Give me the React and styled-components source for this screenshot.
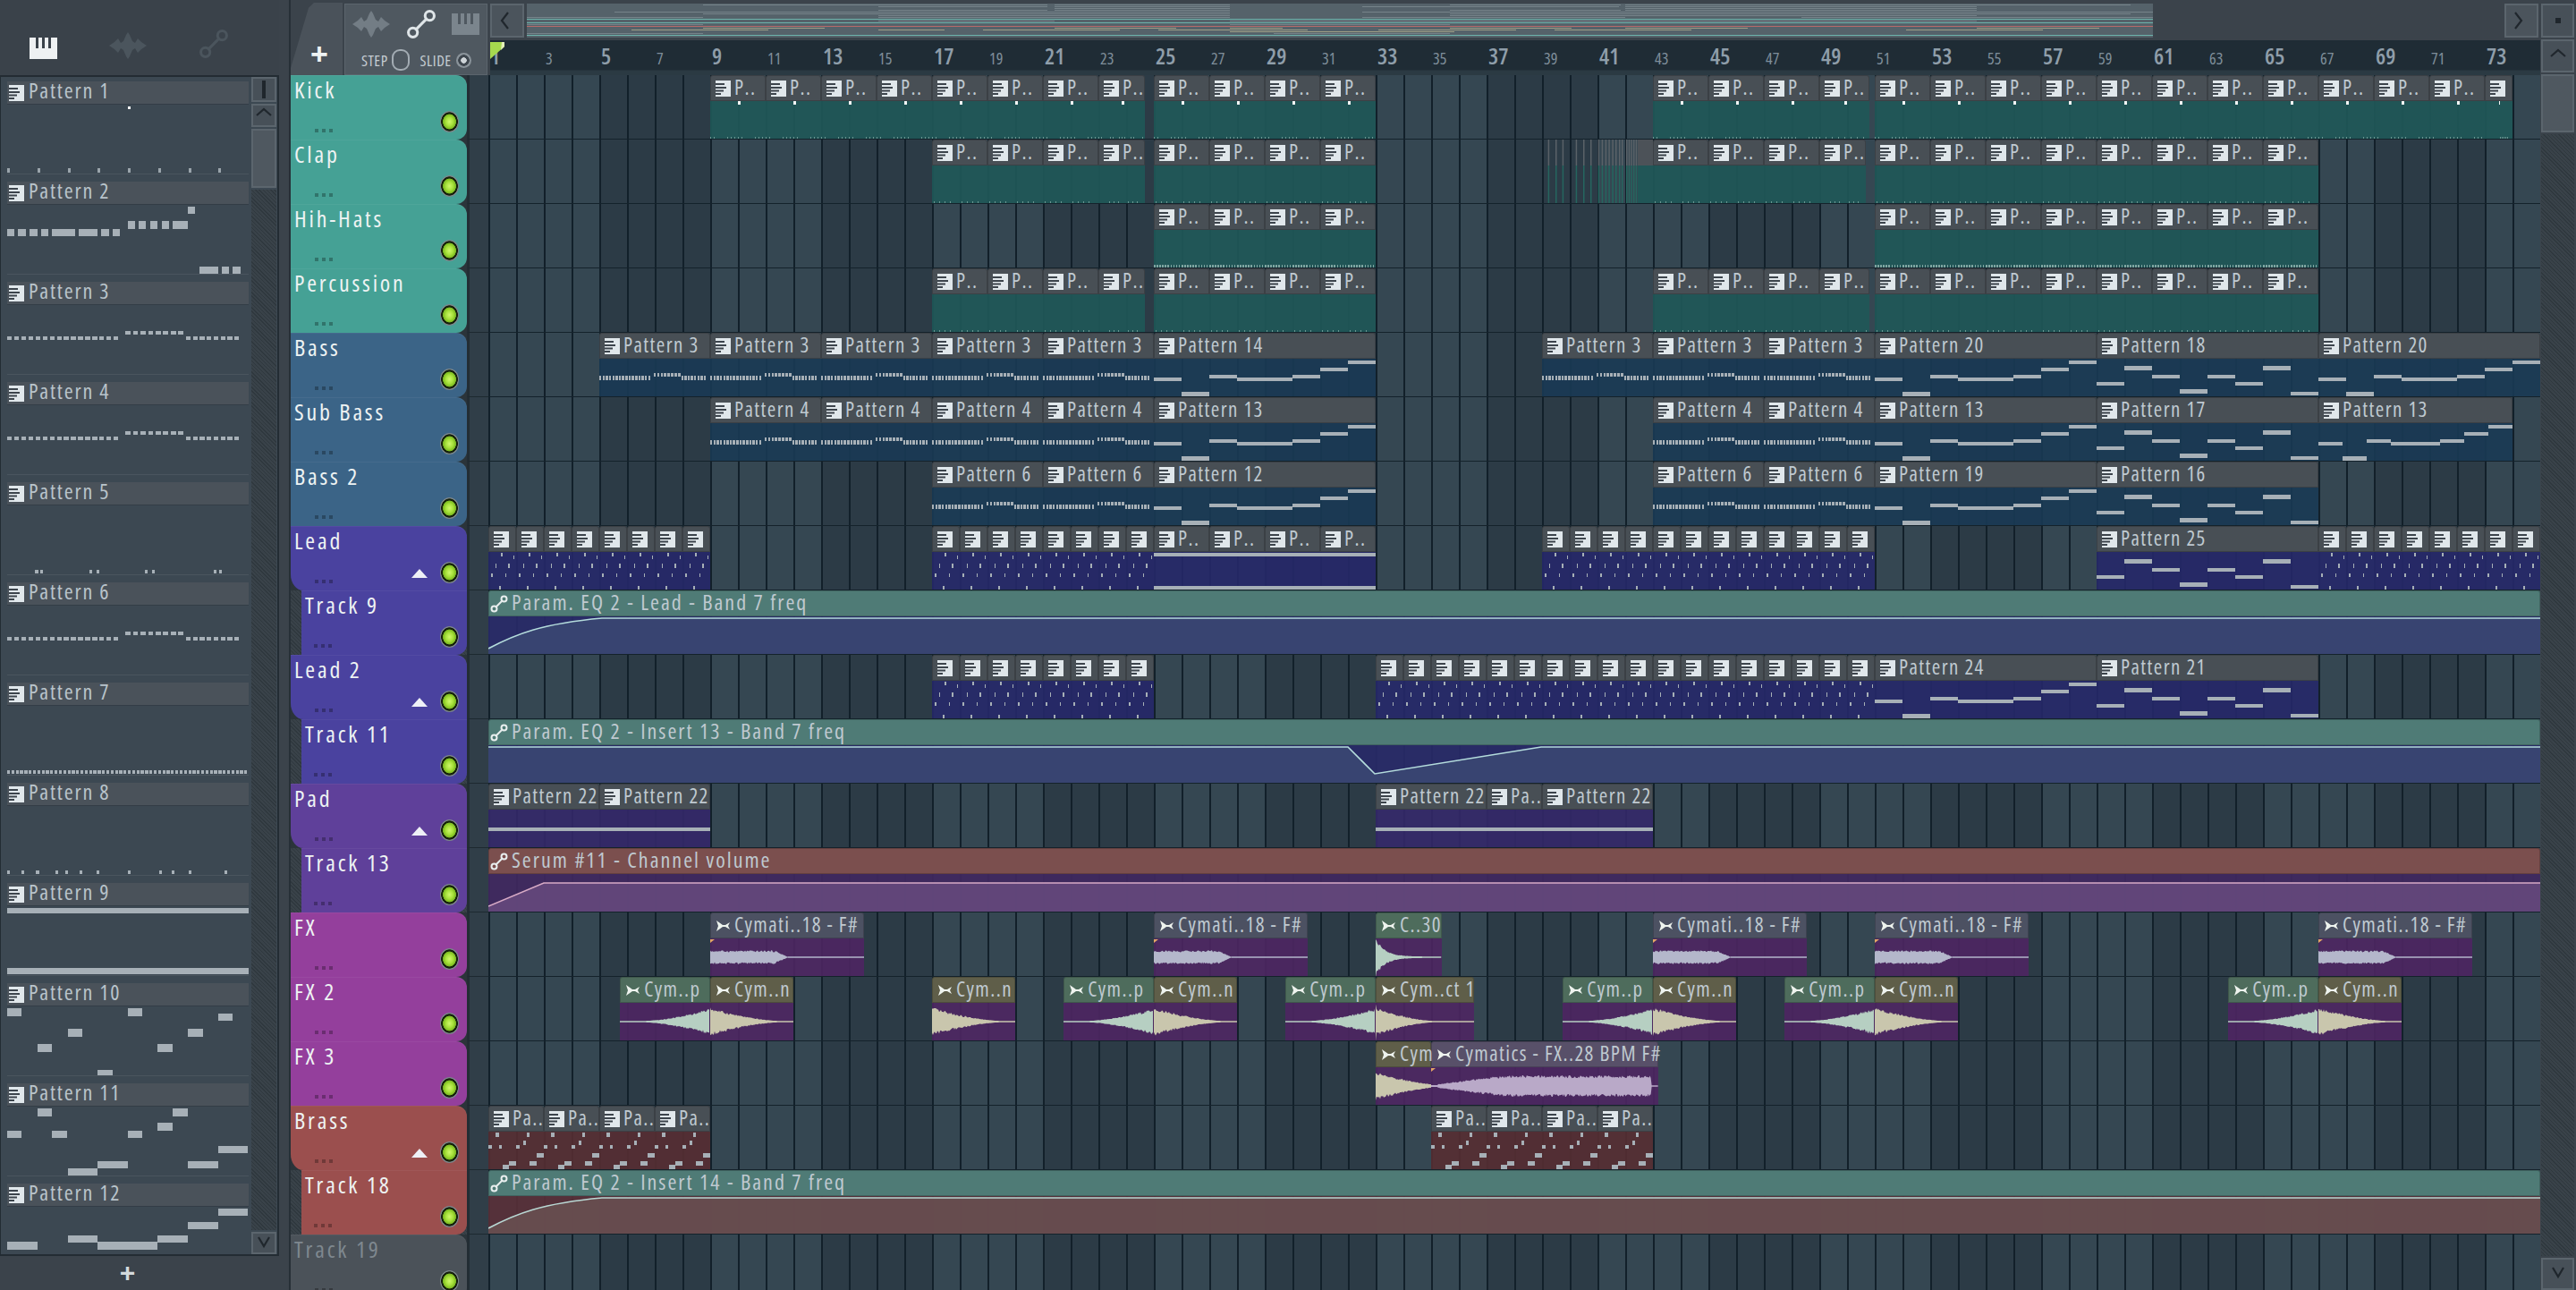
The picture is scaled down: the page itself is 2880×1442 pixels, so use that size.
import React from 'react';
import styled, { createGlobalStyle } from 'styled-components';

const BAR = 31;
const ROW = 72;

const GlobalStyle = createGlobalStyle`
    html, body { margin: 0; padding: 0; background: #3b434b; overflow: hidden; }
    * { box-sizing: border-box; }
    body { font-family: "Open Sans", "Liberation Sans", sans-serif; font-stretch: 75%; }
`;

// note helpers, x is measured off the picker (20..680 across a preview)
const px = (y, xs, h = 0.11) => {
    const out = [];
    for (let i = 0; i < xs.length; i += 2) {
        out.push([(xs[i] - 20) / 660, y, (xs[i + 1] - xs[i]) / 660, h]);
    }
    return out;
};
const dots = (from, to, y, n, h = 0.1) =>
    Array.from({ length: n }, (_, i) => [from + (i * (to - from)) / n, y, ((to - from) / n) * 0.68, h]);

const makeRiff = (h) => [...dots(0, 0.47, 0.46, 16, h), ...dots(0.49, 0.74, 0.38, 8, h), ...dots(0.74, 0.97, 0.46, 8, h)];
const riff = makeRiff(0.1);
const riffThin = makeRiff(0.05);
const marker = [0.5, 0, 0.05, 0.09, '#f2f5f5'];
const kickTicks = [marker, ...Array.from({ length: 16 }, (_, i) => [i / 16, 0.95, 0.012, 0.05, '#6a9792'])];
const clapTicks = Array.from({ length: 10 }, (_, i) => [i / 10 + 0.03, 0.95, 0.012, 0.05, '#6a9792']);
const hatTicks = Array.from({ length: 42 }, (_, i) => [i / 42, 0.94, 0.012, 0.06, '#7fa5a1']);
const leadDots = [[0.45, 0.02, 0.05, 0.1], [0.9, 0.1, 0.05, 0.1], [0.25, 0.32, 0.05, 0.1], [0.72, 0.32, 0.05, 0.1], [0.1, 0.56, 0.05, 0.1], [0.6, 0.56, 0.05, 0.1], [0.4, 0.9, 0.05, 0.1]];

const line14 = [[0, 0.5, 0.125, 0.1], [0.125, 0.89, 0.125, 0.1], [0.25, 0.42, 0.125, 0.1], [0.375, 0.5, 0.25, 0.1], [0.625, 0.42, 0.125, 0.1], [0.75, 0.23, 0.125, 0.1], [0.875, 0.04, 0.125, 0.1]];
const line18 = [[0, 0.62, 0.125, 0.1], [0.125, 0.2, 0.125, 0.1], [0.25, 0.42, 0.125, 0.1], [0.375, 0.82, 0.125, 0.1], [0.5, 0.42, 0.125, 0.1], [0.625, 0.62, 0.125, 0.1], [0.75, 0.2, 0.125, 0.1], [0.875, 0.88, 0.125, 0.1]];
const padLine = [[0, 0.48, 1, 0.1]];
const topBottom = [[0, 0.02, 1, 0.09], [0, 0.9, 1, 0.09]];

const PATTERNS = [
    { name: 'Pattern 1', notes: [[0.5, 0.02, 0.012, 0.05, '#fff'], ...Array.from({ length: 8 }, (_, i) => [i / 8, 0.92, 0.012, 0.07, '#9aa4ab'])] },
    { name: 'Pattern 2', notes: [
        ...px(0.35, [20, 40, 50, 72, 82, 102, 113, 133, 143, 205, 215, 267, 277, 298, 308, 328]),
        ...px(0.24, [349, 370, 380, 400, 411, 431, 442, 462, 473, 514]),
        ...px(0.02, [514, 534]),
        ...px(0.89, [545, 596, 606, 627, 637, 658]),
    ] },
    { name: 'Pattern 3', notes: riffThin },
    { name: 'Pattern 4', notes: riffThin },
    { name: 'Pattern 5', notes: [0.116, 0.137, 0.34, 0.37, 0.57, 0.6, 0.856, 0.877].map((x) => [x, 0.93, 0.012, 0.06]) },
    { name: 'Pattern 6', notes: riffThin },
    { name: 'Pattern 7', notes: dots(0, 1, 0.93, 56, 0.06) },
    { name: 'Pattern 8', notes: [0, 0.06, 0.12, 0.2, 0.24, 0.3, 0.37, 0.5, 0.63, 0.68, 0.75, 0.9].map((x) => [x, 0.93, 0.012, 0.06]) },
    { name: 'Pattern 9', notes: topBottom },
    { name: 'Pattern 10', notes: [
        ...px(0.03, [20, 60, 349, 390]),
        ...px(0.1, [596, 637]),
        ...px(0.33, [185, 225, 514, 555]),
        ...px(0.55, [102, 143, 431, 472]),
        ...px(0.92, [267, 308]),
    ] },
    { name: 'Pattern 11', notes: [
        ...px(0.03, [102, 143, 473, 514]),
        ...px(0.24, [431, 472]),
        ...px(0.35, [20, 60, 143, 184, 349, 390]),
        ...px(0.57, [596, 678]),
        ...px(0.79, [267, 349, 514, 596]),
        ...px(0.89, [185, 267]),
    ] },
    { name: 'Pattern 12', notes: [
        ...px(0.02, [596, 678]),
        ...px(0.22, [514, 596]),
        ...px(0.41, [185, 267, 431, 514]),
        ...px(0.51, [20, 102, 267, 349, 349, 431]),
    ] },
];
const brassNotes = PATTERNS[10].notes;

const seq = (start, count, len, label, notes, lastLen) =>
    Array.from({ length: count }, (_, i) => ({
        type: 'pattern',
        start: start + i * len,
        len: i === count - 1 && lastLen ? lastLen : len,
        label,
        notes,
    }));
const wave = (start, len, label, head, fill, env, mark) => ({ type: 'audio', start, len, label, head, fill, env, mark });
const auto = (label, path, theme) => ({ type: 'auto', start: 1, len: 74, label, path, ...theme });

// waveform envelopes, t = 0..1 across the clip
const envFx = (t) => (t < 0.42 ? 7 : t < 0.5 ? 7 - (t - 0.42) * 80 : 0.7);
const envHit = (t) => 20 * Math.exp(-t * 7) + 0.7;
const envRise = (t) => 13 * Math.pow(Math.max(0, (t - 0.25) / 0.75), 1.6) + 0.7;
const envFall = (t) => 14 * Math.pow(Math.max(0, 1 - t / 0.85), 1.6) + 0.7;
const envFallLong = (t) => (t < 0.004 ? 20 : 14 * Math.pow(Math.max(0, 1 - t / 0.6), 1.6) + 0.7);
const envSwell = (t) => (t > 0.97 ? 0.7 : t < 0.03 ? 1 : Math.min(11, 1 + t * 32));

const GREEN = '#4e6c5c';
const OLIVE = '#5f5e49';
const SLATE = '#4c5162';
const WAVE_G = '#b6cfc2';
const WAVE_O = '#c9c6ad';
const WAVE_S = '#b4b7cb';

const cymFx = (start) => wave(start, 5.55, 'Cymati..18 - F#', SLATE, WAVE_S, envFx, true);
const cymP = (start) => wave(start, 3.25, 'Cym..p', GREEN, WAVE_G, envRise);
const cymN = (start) => wave(start, 3, 'Cym..n', OLIVE, WAVE_O, envFall);

const TEAL_BODY = 'rgba(32,88,88,.92)';
const tealAuto = { head: '#4f7b76', above: 'rgba(40,42,104,.92)', below: 'rgba(58,70,114,.92)', stroke: '#b4dcdc' };

const TRACKS = [
    { name: 'Kick', color: '#45a195', body: TEAL_BODY, clips: [
        ...seq(9, 8, 2, 'P..', kickTicks, 1.7), ...seq(25, 4, 2, 'P..', kickTicks), ...seq(43, 4, 2, 'P..', kickTicks, 1.8),
        ...seq(51, 11, 2, 'P..', kickTicks), ...seq(73, 1, 1, '', kickTicks),
    ] },
    { name: 'Clap', color: '#45a195', body: TEAL_BODY, clips: [
        ...seq(17, 4, 2, 'P..', clapTicks, 1.7), ...seq(25, 4, 2, 'P..', clapTicks), { type: 'glitch', start: 39, len: 4 },
        ...seq(43, 4, 2, 'P..', clapTicks, 1.7), ...seq(51, 8, 2, 'P..', clapTicks),
    ] },
    { name: 'Hih-Hats', color: '#45a195', body: TEAL_BODY, clips: [
        ...seq(25, 4, 2, 'P..', hatTicks), ...seq(51, 8, 2, 'P..', hatTicks),
    ] },
    { name: 'Percussion', color: '#45a195', body: TEAL_BODY, clips: [
        ...seq(17, 4, 2, 'P..', clapTicks, 1.7), ...seq(25, 4, 2, 'P..', clapTicks), ...seq(43, 4, 2, 'P..', clapTicks, 1.8), ...seq(51, 8, 2, 'P..', clapTicks),
    ] },
    { name: 'Bass', color: '#3b6487', body: 'rgba(26,58,84,.9)', clips: [
        ...seq(5, 5, 4, 'Pattern 3', riff), ...seq(25, 1, 8, 'Pattern 14', line14), ...seq(39, 3, 4, 'Pattern 3', riff),
        ...seq(51, 1, 8, 'Pattern 20', line14), ...seq(59, 1, 8, 'Pattern 18', line18), ...seq(67, 1, 8, 'Pattern 20', line14),
    ] },
    { name: 'Sub Bass', color: '#3b6487', body: 'rgba(26,58,84,.9)', clips: [
        ...seq(9, 4, 4, 'Pattern 4', riff), ...seq(25, 1, 8, 'Pattern 13', line14), ...seq(43, 2, 4, 'Pattern 4', riff),
        ...seq(51, 1, 8, 'Pattern 13', line14), ...seq(59, 1, 8, 'Pattern 17', line18), ...seq(67, 1, 7, 'Pattern 13', line14),
    ] },
    { name: 'Bass 2', color: '#3b6487', body: 'rgba(26,58,84,.9)', clips: [
        ...seq(17, 2, 4, 'Pattern 6', riff), ...seq(25, 1, 8, 'Pattern 12', line14), ...seq(43, 2, 4, 'Pattern 6', riff),
        ...seq(51, 1, 8, 'Pattern 19', line14), ...seq(59, 1, 8, 'Pattern 16', line18),
    ] },
    { name: 'Lead', color: '#4a429f', parent: true, body: 'rgba(38,40,105,.9)', clips: [
        ...seq(1, 8, 1, '', leadDots), ...seq(17, 8, 1, '', leadDots), ...seq(25, 4, 2, 'P..', topBottom), ...seq(39, 12, 1, '', leadDots),
        ...seq(59, 1, 8, 'Pattern 25', line18), ...seq(67, 8, 1, '', leadDots),
    ] },
    { name: 'Track 9', color: '#4a429f', child: true, clips: [
        auto('Param. EQ 2 - Lead - Band 7 freq', 'M0 36 C30 20 60 8 127 2 L2294 2', tealAuto),
    ] },
    { name: 'Lead 2', color: '#4a429f', parent: true, body: 'rgba(38,40,105,.9)', clips: [
        ...seq(17, 8, 1, '', leadDots), ...seq(33, 18, 1, '', leadDots), ...seq(51, 1, 8, 'Pattern 24', line14), ...seq(59, 1, 8, 'Pattern 21', line18),
    ] },
    { name: 'Track 11', color: '#4a429f', child: true, clips: [
        auto('Param. EQ 2 - Insert 13 - Band 7 freq', 'M0 2 L961 2 L991 32 L1177 2 L2294 2', tealAuto),
    ] },
    { name: 'Pad', color: '#5f409a', parent: true, body: 'rgba(52,40,105,.9)', clips: [
        ...seq(1, 2, 4, 'Pattern 22', padLine), ...seq(33, 1, 4, 'Pattern 22', padLine), ...seq(37, 1, 2, 'Pa..', padLine), ...seq(39, 1, 4, 'Pattern 22', padLine),
    ] },
    { name: 'Track 13', color: '#5f409a', child: true, clips: [
        auto('Serum #11 - Channel volume', 'M0 36 L62 10 L2294 10', { head: '#7b4f4e', above: 'rgba(64,40,95,.92)', below: 'rgba(100,72,124,.92)', stroke: '#d8abc6' }),
    ] },
    { name: 'FX', color: '#943f9c', body: 'rgba(78,38,98,.9)', clips: [
        cymFx(9), cymFx(25), wave(33, 2.4, 'C..30', GREEN, WAVE_G, envHit), cymFx(43), cymFx(51), cymFx(67),
    ] },
    { name: 'FX 2', color: '#943f9c', body: 'rgba(78,38,98,.9)', clips: [
        cymP(5.75), cymN(9), cymN(17), cymP(21.75), cymN(25), cymP(29.75), wave(33, 3.55, 'Cym..ct 1', OLIVE, WAVE_O, envFallLong),
        cymP(39.75), cymN(43), cymP(47.75), cymN(51), cymP(63.75), cymN(67),
    ] },
    { name: 'FX 3', color: '#943f9c', body: 'rgba(78,38,98,.9)', clips: [
        wave(33, 2, 'Cym', OLIVE, WAVE_O, (t) => envFall(t * 0.66)),
        wave(35, 8.2, 'Cymatics - FX..28 BPM F#', '#585069', '#b9a9c8', envSwell, true),
    ] },
    { name: 'Brass', color: '#9b4f4e', parent: true, body: 'rgba(86,46,50,.9)', clips: [
        ...seq(1, 4, 2, 'Pa..', brassNotes), ...seq(35, 4, 2, 'Pa..', brassNotes),
    ] },
    { name: 'Track 18', color: '#9b4f4e', child: true, clips: [
        auto('Param. EQ 2 - Insert 14 - Band 7 freq', 'M0 36 C30 20 60 8 127 2 L2294 2', { head: '#4f7b76', above: 'rgba(88,48,56,.92)', below: 'rgba(104,78,80,.92)', stroke: '#b9d8d4' }),
    ] },
    { name: 'Track 19', color: '#4b5259', dim: true, clips: [] },
];

const Shell = styled.div`
    display: flex;
    width: 2880px;
    height: 1442px;
    overflow: hidden;
    background: #3b434b;
    color: #b9c4cb;
`;

/* ---- pattern picker ---- */
const LeftCol = styled.div`
    width: 312px;
    flex: none;
    display: flex;
    flex-direction: column;
`;
const PickerTop = styled.div`
    height: 84px;
    flex: none;
    display: flex;
    align-items: flex-end;
    padding: 0 0 18px 33px;
    gap: 58px;
    background: #3a424a;
`;
const PickerBox = styled.div`
    flex: 1;
    min-height: 0;
    display: flex;
    background: #3c4852;
    border: 2px solid #232c33;
    border-left-width: 1px;
`;
const PickerList = styled.div`
    flex: 1;
    min-width: 0;
    padding: 5px 3px 0 7px;
    display: flex;
    flex-direction: column;
`;
const PickerItem = styled.div`
    height: 112px;
    flex: none;
`;
const ItemHead = styled.div`
    height: 26px;
    display: flex;
    align-items: center;
    gap: 5px;
    padding: 0 0 0 2px;
    background: #4a525a;
    border-bottom: 1px solid #333d46;
    font-size: 24px;
    line-height: 24px;
    letter-spacing: 1.8px;
    color: #b9c4cb;
`;
const ItemLabel = styled.span`
    position: relative;
    top: -3px;
`;
const ItemNotes = styled.div`
    height: 78px;
    border-bottom: 1px solid #4a555e;
`;
const PickerBar = styled.div`
    width: 29px;
    flex: none;
    padding: 0 1px 0 0;
    display: flex;
    flex-direction: column;
    gap: 2px;
`;
const SquareBtn = styled.div`
    flex: none;
    height: ${(p) => p.$h}px;
    display: flex;
    align-items: center;
    justify-content: center;
    background: ${(p) => (p.$thumb ? '#4f5860' : '#475058')};
    border: 2px solid #5b656d;
`;
const Hatch = styled.div`
    flex: 1;
    min-height: 0;
    background: repeating-linear-gradient(45deg, #2f383e 0 1px, #394249 1px 3px);
`;
const PickerFoot = styled.div`
    position: relative;
    z-index: 1;
    height: 38px;
    flex: none;
    display: flex;
    align-items: center;
    justify-content: center;
    padding-right: 27px;
    background: #3b434b;
    font: bold 30px "Liberation Sans", sans-serif;
    color: #d4dadd;
`;
const Seam = styled.div`
    width: 13px;
    flex: none;
    border-right: 2px solid #273037;
`;

/* ---- main column ---- */
const MainCol = styled.div`
    flex: 1;
    min-width: 0;
    display: flex;
    flex-direction: column;
`;
const TopArea = styled.div`
    height: 84px;
    flex: none;
    display: flex;
`;
const PlusTab = styled.div`
    width: 58px;
    flex: none;
    margin-top: 3px;
    display: flex;
    align-items: flex-end;
    justify-content: center;
    padding: 0 0 4px 6px;
    background: #4a525a;
    clip-path: polygon(0 100%, 0 90%, 20px 7%, 26px 0, 100% 0, 100% 100%);
    font: bold 34px "Liberation Sans", sans-serif;
    color: #eef2f3;
`;
const ToolPanel = styled.div`
    width: 160px;
    flex: none;
    margin: 4px 3px 0 2px;
    padding: 4px 8px 0;
    display: flex;
    flex-direction: column;
    background: #4f5860;
    border: 1px solid #5b656d;
`;
const ToolIcons = styled.div`
    height: 36px;
    display: flex;
    align-items: center;
    justify-content: space-between;
`;
const ToolModes = styled.div`
    flex: 1;
    display: flex;
    align-items: center;
    padding: 6px 0 0 10px;
    font-size: 17px;
    letter-spacing: 0.5px;
    color: #c4ccd2;
`;
const Toggle = styled.span`
    width: 20px;
    height: 24px;
    margin: 0 12px 0 4px;
    border: 2px solid #a3acb3;
    border-radius: 9px;
`;
const Radio = styled.span`
    width: 17px;
    height: 17px;
    margin-left: 5px;
    border-radius: 50%;
    background: radial-gradient(circle, #cdd3d7 0 3px, #3f474f 3.5px 6px, #8a939a 6.5px);
`;
const Timeline = styled.div`
    flex: 1;
    min-width: 0;
    display: flex;
    flex-direction: column;
`;
const Overview = styled.div`
    height: 45px;
    flex: none;
    display: flex;
    gap: 3px;
    padding: 4px 2px 3px 0;
`;
const ScrollBtn = styled.div`
    width: 38px;
    flex: none;
    display: flex;
    align-items: center;
    justify-content: center;
    background: #4b545c;
    border: 2px solid #5b656d;
    margin-left: ${(p) => (p.$end ? 'auto' : 0)};
`;
const Minimap = styled.div`
    width: 1818px;
    flex: none;
    background: #55626a;
`;
const Ruler = styled.div`
    position: relative;
    height: 39px;
    flex: none;
    display: flex;
    align-items: baseline;
    padding-top: 5px;
    background: linear-gradient(#1f2c35 0 33px, #2b3a43 34px);
`;
const RulerCell = styled.div`
    width: ${BAR * 2}px;
    flex: none;
    font-size: ${(p) => (p.$major ? 25 : 18)}px;
    font-weight: ${(p) => (p.$major ? 600 : 400)};
    line-height: 1;
    color: ${(p) => (p.$major ? '#8f9eaa' : '#7f8f9b')};
`;
const PlayMark = styled.svg`
    position: absolute;
    left: 0;
    top: 2px;
`;
const RowsArea = styled.div`
    flex: 1;
    min-height: 0;
    display: flex;
    flex-direction: column;
`;
const Row = styled.div`
    height: ${ROW}px;
    flex: none;
    display: flex;
    background: #2b343a;
`;
const HeadSlot = styled.div`
    width: 197px;
    flex: none;
    background: ${(p) => (p.$hatch ? 'repeating-linear-gradient(45deg, #2f383e 0 1px, #394249 1px 3px)' : 'transparent')};
`;
const Head = styled.div`
    height: 100%;
    margin-left: ${(p) => (p.$child ? 12 : 0)}px;
    padding: 0 9px 8px 4px;
    display: flex;
    flex-direction: column;
    justify-content: space-between;
    background: ${(p) => p.$color};
    border-radius: ${(p) => (p.$parent ? '0 12px 0 14px / 0 12px 0 18px' : p.$child ? '0 0 12px 0' : '0 12px 12px 0')};
    font-size: 26px;
    letter-spacing: 2.8px;
    line-height: 32px;
    color: ${(p) => (p.$dim ? '#7f888f' : '#eef3f3')};
    box-shadow: inset 0 1px 0 rgba(255, 255, 255, 0.05);
`;
const HeadFoot = styled.div`
    display: flex;
    align-items: flex-end;
    justify-content: flex-end;
    gap: 14px;
`;
const Dots = styled.span`
    width: 4px;
    height: 4px;
    margin: 0 auto 0 ${(p) => (p.$child ? 10 : 23)}px;
    background: rgba(0, 0, 0, 0.28);
    box-shadow: 8px 0 0 rgba(0, 0, 0, 0.28), 16px 0 0 rgba(0, 0, 0, 0.28);
`;
const FoldArrow = styled.span`
    width: 0;
    height: 0;
    margin-bottom: 6px;
    border-left: 9px solid transparent;
    border-right: 9px solid transparent;
    border-bottom: 10px solid #eef0f6;
`;
const Led = styled.span`
    width: 21px;
    height: 24px;
    border-radius: 50%;
    background: radial-gradient(closest-side, #cdf76a 0, #a6e03a 40%, #7ab820 68%, #16220c 73%, #16220c 86%, #7b858a 91%);
`;
const Gutter = styled.div`
    width: 24px;
    flex: none;
    border-left: 3px solid #232d34;
    background: #303e48;
    border-bottom: 1px solid #1d2930;
`;
/* the lane is a 1/16 bar grid, clips sit on it by column */
const Lane = styled.div`
    flex: 1;
    min-width: 0;
    display: grid;
    grid-template-columns: repeat(${74 * 16}, ${BAR / 16}px);
    grid-template-rows: 71px;
    background-image:
        repeating-linear-gradient(90deg, #12202a 0 2px, transparent 2px ${BAR}px),
        repeating-linear-gradient(90deg, #354752 0 ${BAR * 4}px, #2c3b46 ${BAR * 4}px ${BAR * 8}px);
    border-bottom: 1px solid #14222b;
`;
const ClipBox = styled.div.attrs((p) => ({
    style: { gridColumn: `${Math.round((p.$start - 1) * 16) + 1} / span ${Math.round(p.$len * 16)}` },
}))`
    grid-row: 1;
    min-width: 0;
    display: flex;
    flex-direction: column;
`;
const ClipHead = styled.div`
    height: 29px;
    flex: none;
    display: flex;
    align-items: center;
    gap: 4px;
    padding: 0 0 0 ${(p) => (p.$auto ? 1 : 5)}px;
    background: ${(p) => p.$color};
    border: 1px solid rgba(0, 0, 0, 0.18);
    border-radius: 3px 3px 0 0;
    white-space: nowrap;
    font-size: ${(p) => (p.$auto ? 24 : 23)}px;
    line-height: 26px;
    letter-spacing: ${(p) => (p.$auto ? 2 : 1.4)}px;
    color: #bfc9d0;
`;
const ClipLabel = styled.span`
    position: relative;
    top: -2px;
`;
const ClipBody = styled.div`
    flex: 1;
    min-height: 0;
    background: ${(p) => p.$color || 'transparent'};
`;
const DrawFill = styled.svg`
    display: block;
    width: 100%;
    height: 100%;
`;

/* ---- right scroll column ---- */
const ScrollCol = styled.div`
    width: 40px;
    flex: none;
    display: flex;
    flex-direction: column;
    gap: 2px;
    padding: 4px 2px 0 1px;
`;

/* ---- icons and drawings ---- */
const PianoTile = () => (
    <svg width="17" height="18" viewBox="0 0 17 18" style={{ flex: 'none' }}>
        <rect width="17" height="18" fill="#e0e7eb" />
        <rect y="3" width="10" height="2" fill="#3c444c" />
        <rect y="7" width="12" height="2" fill="#3c444c" />
        <rect y="10.5" width="9" height="2" fill="#3c444c" />
        <rect y="14" width="6" height="2" fill="#3c444c" />
    </svg>
);
const AudioGlyph = () => (
    <svg width="17" height="14" viewBox="0 0 17 14" style={{ flex: 'none' }}>
        <path d="M1 1 L8 6 L11 6 L16 3 L14 7 L16 11 L11 8 L8 8 L1 13 L3 7 Z" fill="#eef3ee" />
    </svg>
);
const AutoGlyph = ({ size = 20, color = '#e8eeee', width = 2 }) => (
    <svg width={size} height={size} viewBox="0 0 20 20" style={{ flex: 'none' }}>
        <line x1="6" y1="14" x2="14" y2="6" stroke={color} strokeWidth={width} />
        <circle cx="4.5" cy="15.5" r="3" fill="none" stroke={color} strokeWidth={width} />
        <circle cx="15.5" cy="4.5" r="3" fill="none" stroke={color} strokeWidth={width} />
    </svg>
);
const WaveGlyph = ({ color }) => (
    <svg width="42" height="30" viewBox="0 0 42 30">
        <path d="M0 15 L6 11 L10 7 L13 12 L16 10 L19 3 L21 0 L23 3 L26 10 L29 12 L32 7 L36 11 L42 15 L36 19 L32 23 L29 18 L26 20 L23 27 L21 30 L19 27 L16 20 L13 18 L10 23 L6 19 Z" fill={color} />
    </svg>
);
const PianoGlyph = ({ color, w = 31, h = 24, keys = '#3a424a' }) => (
    <svg width={w} height={h} viewBox="0 0 31 24">
        <rect width="31" height="24" fill={color} />
        <rect x="7" y="0" width="3" height="12" fill={keys} />
        <rect x="14" y="0" width="3" height="12" fill={keys} />
        <rect x="21" y="0" width="3" height="12" fill={keys} />
    </svg>
);
const Chevron = ({ dir, color = '#20272d' }) => {
    const d = { left: 'M11 2 L4 11 L11 20', right: 'M3 2 L10 11 L3 20', up: 'M2 11 L10 4 L18 11', down: 'M4 4 L10 14 L16 4' }[dir];
    return (
        <svg width="20" height="22" viewBox="0 0 20 22">
            <path d={d} fill="none" stroke={color} strokeWidth="2.2" />
        </svg>
    );
};

const Notes = ({ notes }) => (
    <DrawFill viewBox="0 0 1000 100" preserveAspectRatio="none" shapeRendering="crispEdges">
        {notes.map((n, i) => (
            <rect key={i} x={n[0] * 1000} y={n[1] * 100} width={n[2] * 1000} height={n[3] * 100} fill={n[4] || '#a7b0b7'} />
        ))}
    </DrawFill>
);

const noise = (i, seed) => {
    const v = Math.sin(i * 12.9898 + seed * 78.233) * 43758.5453;
    return v - Math.floor(v);
};
const wavePath = (w, mid, env, seed) => {
    const up = [];
    const down = [];
    for (let x = 0; x <= w; x += 1) {
        const a = env(x / w);
        const k = a > 1.5 ? 0.8 + noise(x, seed) * 0.3 : 1;
        up.push(`${x} ${(mid - a * k).toFixed(1)}`);
        down.unshift(`${x} ${(mid + a * (a > 1.5 ? 0.8 + noise(x + 97, seed) * 0.3 : 1)).toFixed(1)}`);
    }
    return `M${up.join(' L')} L${down.join(' L')} Z`;
};

const Clip = ({ clip, body }) => {
    if (clip.type === 'glitch') {
        const stripes = [150, 175, 198, 243, 268, 292, 318, 330, 342, 353, 365, 376, 388, 397, 412, 420, 428, 436, 444];
        return (
            <ClipBox $start={clip.start} $len={clip.len}>
                <DrawFill viewBox="0 0 124 71" preserveAspectRatio="none">
                    {stripes.map((s) => (
                        <g key={s}>
                            <rect x={(s - 130) / 3} y="0" width="1.5" height="29" fill="#5a6268" />
                            <rect x={(s - 130) / 3} y="29" width="1.5" height="42" fill="#25665f" />
                        </g>
                    ))}
                    <rect x="107" y="0" width="17" height="29" fill="#4c5258" />
                    <rect x="107" y="29" width="17" height="42" fill={body} />
                </DrawFill>
            </ClipBox>
        );
    }
    if (clip.type === 'auto') {
        return (
            <ClipBox $start={clip.start} $len={clip.len}>
                <ClipHead $color={clip.head} $auto>
                    <AutoGlyph size={20} />
                    <ClipLabel>{clip.label}</ClipLabel>
                </ClipHead>
                <ClipBody>
                    <DrawFill viewBox="0 0 2294 42" preserveAspectRatio="none">
                        <rect width="2294" height="42" fill={clip.above} />
                        <path d={`${clip.path} L2294 42 L0 42 Z`} fill={clip.below} />
                        <path d={clip.path} fill="none" stroke={clip.stroke} strokeWidth="1.6" />
                    </DrawFill>
                </ClipBody>
            </ClipBox>
        );
    }
    if (clip.type === 'audio') {
        const w = clip.len * BAR;
        return (
            <ClipBox $start={clip.start} $len={clip.len}>
                <ClipHead $color={clip.head}>
                    <AudioGlyph />
                    <ClipLabel>{clip.label}</ClipLabel>
                </ClipHead>
                <ClipBody $color={body}>
                    <DrawFill viewBox={`0 0 ${w} 42`} preserveAspectRatio="none">
                        <path d={wavePath(w, 21, clip.env, clip.start)} fill={clip.fill} />
                        {clip.mark && <path d="M0 1 L5 1 L0 5 Z" fill="#e3a565" />}
                    </DrawFill>
                </ClipBody>
            </ClipBox>
        );
    }
    return (
        <ClipBox $start={clip.start} $len={clip.len}>
            <ClipHead $color="#484f55">
                <PianoTile />
                {clip.label && <ClipLabel>{clip.label}</ClipLabel>}
            </ClipHead>
            <ClipBody $color={body}>
                <Notes notes={clip.notes} />
            </ClipBody>
        </ClipBox>
    );
};

const MinimapDrawing = () => (
    <DrawFill viewBox="0 0 74 38" preserveAspectRatio="none" shapeRendering="crispEdges">
        {TRACKS.flatMap((t, row) =>
            t.clips.map((c, i) => (
                <rect
                    key={`${row}-${i}`}
                    x={c.start - 1}
                    y={row * 2 + 1.2}
                    width={c.len}
                    height={c.type === 'auto' ? 1.2 : 0.6}
                    fill={c.type === 'auto' ? (c.head === '#7b4f4e' ? '#b56a6a' : '#6db3ac') : c.type === 'audio' ? '#9f9f86' : '#76838a'}
                />
            ))
        )}
    </DrawFill>
);

const rulerBars = Array.from({ length: 37 }, (_, i) => i * 2 + 1);

const App = () => (
    <Shell>
        <GlobalStyle />
        <LeftCol>
            <PickerTop>
                <PianoGlyph color="#eef1f2" />
                <WaveGlyph color="#4b555d" />
                <AutoGlyph size={34} color="#4b555d" width={1.8} />
            </PickerTop>
            <PickerBox>
                <PickerList>
                    {PATTERNS.map((p) => (
                        <PickerItem key={p.name}>
                            <ItemHead>
                                <PianoTile />
                                <ItemLabel>{p.name}</ItemLabel>
                            </ItemHead>
                            <ItemNotes>
                                <Notes notes={p.notes} />
                            </ItemNotes>
                        </PickerItem>
                    ))}
                </PickerList>
                <PickerBar>
                    <SquareBtn $h={28}>
                        <svg width="4" height="20"><rect width="4" height="20" fill="#1f262c" /></svg>
                    </SquareBtn>
                    <SquareBtn $h={26}><Chevron dir="up" /></SquareBtn>
                    <SquareBtn $h={66} $thumb />
                    <Hatch />
                    <SquareBtn $h={25}><Chevron dir="down" /></SquareBtn>
                </PickerBar>
            </PickerBox>
            <PickerFoot>+</PickerFoot>
        </LeftCol>
        <Seam />
        <MainCol>
            <TopArea>
                <PlusTab>+</PlusTab>
                <ToolPanel>
                    <ToolIcons>
                        <WaveGlyph color="#737d85" />
                        <AutoGlyph size={34} color="#dfe5e8" width={1.8} />
                        <PianoGlyph color="#7b858d" keys="#4f5860" />
                    </ToolIcons>
                    <ToolModes>
                        STEP<Toggle />SLIDE<Radio />
                    </ToolModes>
                </ToolPanel>
                <Timeline>
                    <Overview>
                        <ScrollBtn><Chevron dir="left" /></ScrollBtn>
                        <Minimap><MinimapDrawing /></Minimap>
                        <ScrollBtn $end><Chevron dir="right" /></ScrollBtn>
                    </Overview>
                    <Ruler>
                        {rulerBars.map((n) => (
                            <RulerCell key={n} $major={(n - 1) % 4 === 0}>{n}</RulerCell>
                        ))}
                        <PlayMark width="17" height="19" viewBox="0 0 17 19">
                            <path d="M0 0 L16 0 L16 5 L0 19 Z" fill="#a6d94e" />
                            <path d="M16 0 L16 5 L12 9 L13 0 Z" fill="#e4efb8" />
                        </PlayMark>
                    </Ruler>
                </Timeline>
            </TopArea>
            <RowsArea>
                {TRACKS.map((t) => (
                    <Row key={t.name}>
                        <HeadSlot $hatch={t.child}>
                            <Head $color={t.color} $parent={t.parent} $child={t.child} $dim={t.dim}>
                                {t.name}
                                <HeadFoot>
                                    <Dots $child={t.child} />
                                    {t.parent && <FoldArrow />}
                                    <Led />
                                </HeadFoot>
                            </Head>
                        </HeadSlot>
                        <Gutter />
                        <Lane>
                            {t.clips.map((c, i) => (
                                <Clip key={i} clip={c} body={t.body} />
                            ))}
                        </Lane>
                    </Row>
                ))}
            </RowsArea>
        </MainCol>
        <ScrollCol>
            <SquareBtn $h={38}>
                <svg width="6" height="6"><rect width="6" height="6" fill="#1f262c" /></svg>
            </SquareBtn>
            <SquareBtn $h={37}><Chevron dir="up" /></SquareBtn>
            <SquareBtn $h={65} $thumb />
            <Hatch />
            <SquareBtn $h={36}><Chevron dir="down" color="#1f262c" /></SquareBtn>
        </ScrollCol>
    </Shell>
);

export default App;
